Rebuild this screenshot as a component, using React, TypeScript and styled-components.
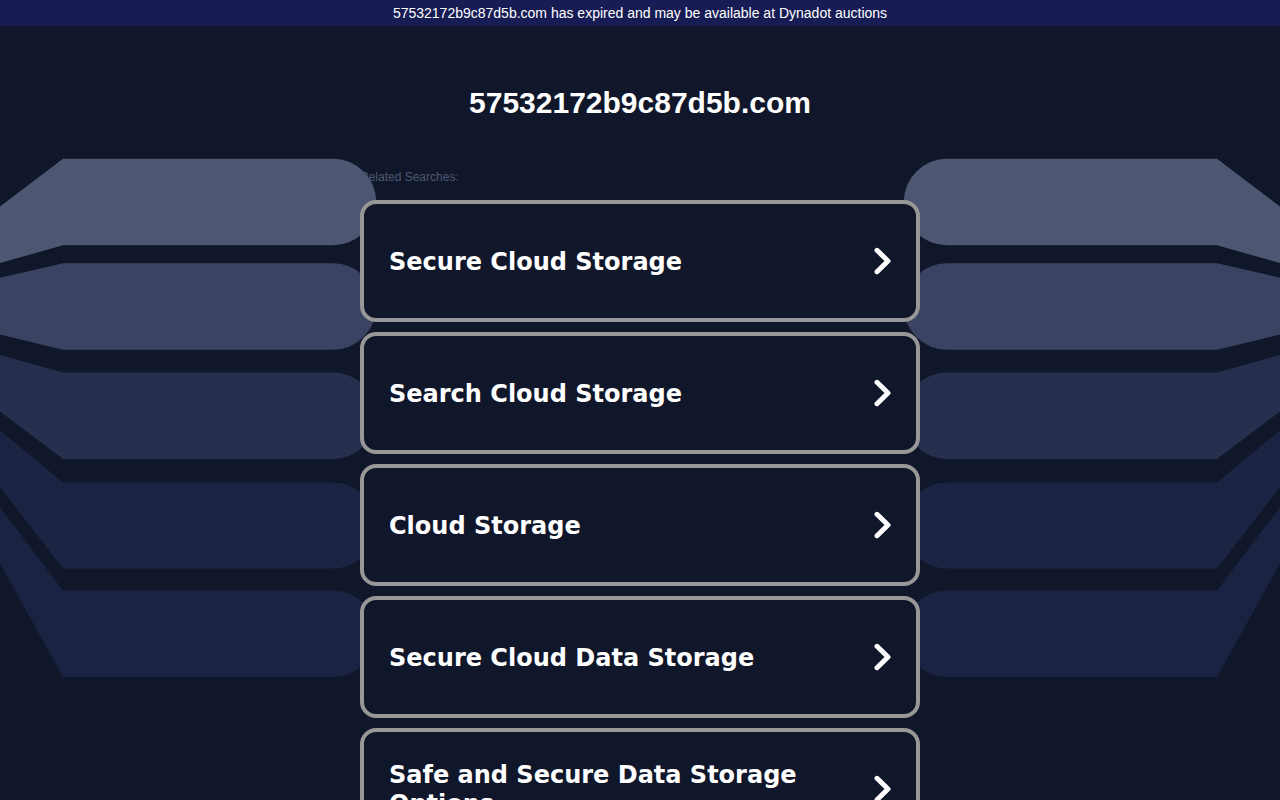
import React from 'react';
import styled, { createGlobalStyle } from 'styled-components';

const GlobalStyle = createGlobalStyle`
  body {
    margin: 0;
    background: #10172a;
    color: #fff;
    font-family: 'Liberation Sans', Arial, sans-serif;
  }
`;

const Page = styled.div`
  position: relative;
  min-height: 100vh;
`;

const Backdrop = styled.svg`
  position: absolute;
  top: 0;
  left: 0;
  width: 100%;
  height: 100vh;
`;

const Foreground = styled.div`
  position: relative;
`;

const Banner = styled.a`
  display: block;
  padding: 5px;
  background: #171c54;
  color: #fff;
  font-size: 14px;
  line-height: 16px;
  text-align: center;
  text-decoration: none;
`;

const Title = styled.h1`
  margin: 0;
  padding: 60px 0 50px;
  font-size: 30px;
  line-height: 34px;
  text-align: center;
`;

const Results = styled.main`
  max-width: 560px;
  margin: 0 auto;
`;

const Label = styled.p`
  margin: 0 0 16px;
  color: #4e5771;
  font-size: 12px;
  line-height: 14px;
`;

const List = styled.div`
  display: flex;
  flex-direction: column;
  gap: 10px;
`;

const Card = styled.a`
  display: flex;
  align-items: center;
  justify-content: space-between;
  box-sizing: border-box;
  min-height: 122px;
  padding: 0 24px 0 25px;
  border: 4px solid #979797;
  border-radius: 16px;
  background: #10172a;
  color: #fff;
  font-family: 'DejaVu Sans', Verdana, sans-serif;
  font-size: 24px;
  font-weight: 700;
  line-height: 29px;
  text-decoration: none;
`;

const CardText = styled.span`
  max-width: 440px;
  padding-top: 2px;
`;

const Chevron = styled.svg`
  flex: none;
  width: 18px;
  height: 28px;
`;

const searches = [
  'Secure Cloud Storage',
  'Search Cloud Storage',
  'Cloud Storage',
  'Secure Cloud Data Storage',
  'Safe and Secure Data Storage Options',
];

const bands = [
  { fill: '#4e5771', d: 'M0 206.500L63 158.800H333A43.250 43.250 0 0 1 333 245.300H63L0 263Z' },
  { fill: '#3b4362', d: 'M0 277.700L63 263.200H333A43.300 43.300 0 0 1 333 349.800H63L0 334.500Z' },
  { fill: '#262f4e', d: 'M0 355L63 372.500H333A43.250 43.250 0 0 1 333 459H63L0 411.500Z' },
  { fill: '#1c2444', d: 'M0 430.500L63 482.500H333A43 43 0 0 1 333 568.500H63L0 487Z' },
  { fill: '#1a2342', d: 'M0 507L63 590.500H333A43.250 43.250 0 0 1 333 677H63L0 563.500Z' },
];

const Bands = () => (
  <>
    {bands.map((band) => (
      <path key={band.fill} fill={band.fill} d={band.d} />
    ))}
  </>
);

export default function App() {
  return (
    <Page>
      <GlobalStyle />
      <Backdrop viewBox="0 0 1280 800" preserveAspectRatio="xMidYMin slice" aria-hidden="true">
        <Bands />
        <g transform="matrix(-1 0 0 1 1280 0)">
          <Bands />
        </g>
      </Backdrop>
      <Foreground>
        <Banner href="#">57532172b9c87d5b.com has expired and may be available at Dynadot auctions</Banner>
        <Title>57532172b9c87d5b.com</Title>
        <Results>
          <Label>Related Searches:</Label>
          <List>
            {searches.map((text) => (
              <Card key={text} href="#">
                <CardText>{text}</CardText>
                <Chevron viewBox="0 0 18 28" aria-hidden="true">
                  <path d="M3 3.300L14 14L3 24.700" fill="none" stroke="#fff" strokeWidth="5" strokeLinecap="round" strokeLinejoin="round" />
                </Chevron>
              </Card>
            ))}
          </List>
        </Results>
      </Foreground>
    </Page>
  );
}
